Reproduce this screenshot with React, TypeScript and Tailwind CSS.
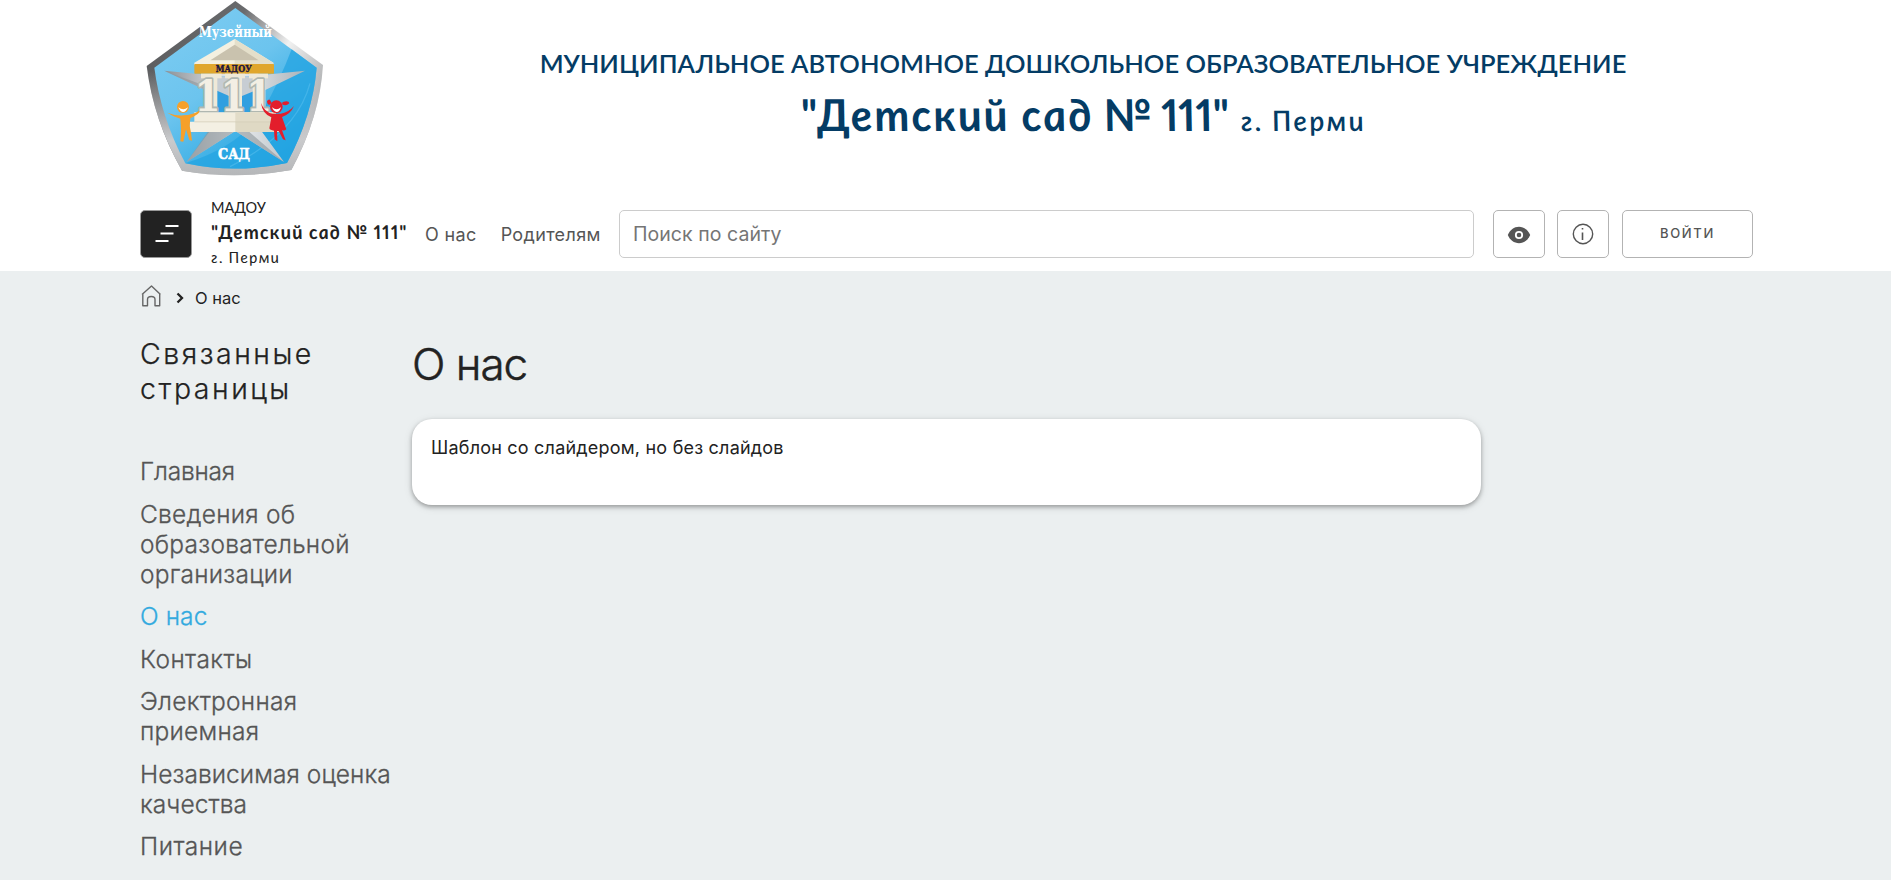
const links: { text: string; cls: string }[] = [
  { text: "Главная", cls: "tracking-[-0.2px]" },
  { text: "Сведения об образовательной организации", cls: "tracking-[0.25px]" },
  { text: "О нас", cls: "tracking-[0.1px] text-[#33aadf]" },
  { text: "Контакты", cls: "tracking-[0.4px]" },
  { text: "Электронная приемная", cls: "tracking-[0.25px]" },
  { text: "Независимая оценка качества", cls: "tracking-[0.07px]" },
  { text: "Питание", cls: "tracking-[0.5px]" },
];

function Emblem() {
  return (
    <svg viewBox="0 0 630 555" className="h-[185px] w-[210px] shrink-0">
      <defs>
        <linearGradient id="rim" x1="0" y1="0" x2="1" y2="0.55">
          <stop offset="0" stopColor="#565759" />
          <stop offset="0.45" stopColor="#6a6b6d" />
          <stop offset="0.72" stopColor="#f1f1f1" />
          <stop offset="1" stopColor="#a9abad" />
        </linearGradient>
        <linearGradient id="rimLow" x1="0" y1="0" x2="0" y2="1">
          <stop offset="0.4" stopColor="#c9cacc" stopOpacity="0" />
          <stop offset="0.8" stopColor="#c9cacc" />
          <stop offset="1" stopColor="#b5b7b9" />
        </linearGradient>
        <linearGradient id="sky" x1="0" y1="0" x2="0.7" y2="1">
          <stop offset="0" stopColor="#7fcdf2" />
          <stop offset="0.5" stopColor="#6cc4ee" />
          <stop offset="1" stopColor="#1fa3e0" />
        </linearGradient>
        <linearGradient id="ray" x1="0" y1="0" x2="1" y2="0">
          <stop offset="0" stopColor="#8b9197" />
          <stop offset="0.5" stopColor="#eef0f2" />
          <stop offset="1" stopColor="#aab3ba" />
        </linearGradient>
      </defs>
      <path d="M316 3 L579 195 Q570 350 484 510 Q315 540 156 512 Q70 360 50 198 Z" fill="url(#rim)" />
      <path d="M316 3 L579 195 Q570 350 484 510 Q315 540 156 512 Q70 360 50 198 Z" fill="url(#rimLow)" />
      <path d="M316 24 L560 203 Q548 345 471 489 Q315 522 166 490 Q92 350 73 203 Z" fill="url(#sky)" />
      <path d="M485 148 L560 203 Q548 345 471 489 Q315 522 166 490 Q330 440 400 330 Q450 240 485 148Z" fill="#24a4e2" opacity="0.75" />
      <path d="M540 250 Q500 400 300 500" stroke="#54bdec" strokeWidth="4" fill="none" opacity="0.6" />
      <path d="M103 212 L245 226 L316 150 L390 226 L525 212 L395 275 L392 390 L462 486 L316 393 L170 486 L242 390 L237 275 Z" fill="url(#ray)" />
      <path d="M103 212 L237 262 V275 Z M316 393 L462 486 L355 393 Z M316 393 L170 486 L235 393 Z" fill="#8e969b" opacity="0.6" />
      <rect x="222" y="230" width="178" height="108" fill="#319fe0" />
      <path d="M222 230 L400 230 L400 262 L316 296 L222 255Z" fill="#c7cdd3" />
      <path d="M314 117 L430 188 V194 H193 V188 Z" fill="#f4f0e0" />
      <path d="M314 117 L430 188 V194 H314 Z" fill="#e4dfca" />
      <path d="M314 134 L386 181 H241 Z" fill="#c9c2ae" />
      <rect x="193" y="192" width="239" height="29" rx="2" fill="#e0a62c" />
      <g fill="#efe9d8">
        <rect x="213" y="221" width="62" height="14" />
        <rect x="285" y="221" width="60" height="14" />
        <rect x="357" y="221" width="57" height="14" />
        <rect x="222" y="233" width="40" height="100" />
        <rect x="296" y="233" width="40" height="100" />
        <rect x="368" y="233" width="38" height="100" />
      </g>
      <text x="311" y="216" textAnchor="middle" textLength="108" lengthAdjust="spacingAndGlyphs" fontSize="28" fontWeight="700" fill="#1c1440" stroke="#1c1440" strokeWidth="1.2" fontFamily="'DejaVu Serif', serif">МАДОУ</text>
      <text x="194" y="333" textLength="232" lengthAdjust="spacingAndGlyphs" fontFamily="'DejaVu Serif', serif" fontSize="131" fontWeight="700" fill="#f3efe4" stroke="#b0b7b0" strokeWidth="11" strokeLinejoin="round" paintOrder="stroke">111</text>
      <path d="M193 337 H437 V366 H193Z" fill="#f2edde" />
      <path d="M316 337 H437 V366 H316Z" fill="#e2dcc8" />
      <path d="M179 365 H452 V396 H179Z" fill="#f4f0e3" />
      <path d="M316 365 H452 V396 H316Z" fill="#dfd9c4" />
      <path d="M193 365.500H437" stroke="#cfc8b2" strokeWidth="2" />
      <g fill="#f6a02a">
        <circle cx="159" cy="321" r="18" />
        <path d="M112 338 Q140 349 160 346 Q188 345 207 332 Q210 338 203 342 Q188 352 181 354 L179 378 Q184 398 186 422 L178 420 L168 388 L160 425 L151 424 Q155 396 151 356 Q130 350 112 338Z" />
      </g>
      <path d="M145 322 Q160 334 174 322 Q168 337 158 336 Q150 334 145 322Z" fill="#fff" />
      <g fill="#e31e2c">
        <circle cx="439" cy="320" r="19" />
        <path d="M422 313 Q412 318 411 303 Q419 292 424 307Z M456 313 Q468 320 478 310 Q477 300 458 306Z" />
        <path d="M393 309 Q404 338 428 341 H452 Q475 338 492 318 Q482 342 456 351 L469 388 Q464 393 456 391 L467 421 L459 418 L446 393 L441 393 L442 424 L434 418 L432 392 Q420 391 418 385 L424 352 Q397 341 393 309Z" />
      </g>
      <path d="M426 322 Q440 334 453 322 Q449 336 440 336 Q431 335 426 322Z" fill="#fff" />
      <text x="316" y="111" textAnchor="middle" textLength="220" lengthAdjust="spacingAndGlyphs" fontSize="45" fontWeight="700" fill="#fff" fontFamily="'DejaVu Serif', serif">Музейный</text>
      <text x="312" y="478" textAnchor="middle" textLength="96" lengthAdjust="spacingAndGlyphs" fontSize="45" fontWeight="700" fill="#fff" stroke="#fff" strokeWidth="1.5" fontFamily="'DejaVu Serif', serif">САД</text>
    </svg>
  );
}

export default function App() {
  return (
    <div className="flex h-[880px] w-full flex-col overflow-hidden bg-white font-['Inter',sans-serif] text-[#222]">
      <header className="flex h-[195px] items-start pl-[130px]">
        <Emblem />
        <div className="ml-[185px] flex w-[1116px] flex-col items-center pt-[43px] font-['Lato',sans-serif] font-semibold text-[#043c65]">
          <div className="h-[41px] text-[25.5px] leading-[40px] tracking-[0.02px] whitespace-nowrap">
            МУНИЦИПАЛЬНОЕ АВТОНОМНОЕ ДОШКОЛЬНОЕ ОБРАЗОВАТЕЛЬНОЕ УЧРЕЖДЕНИЕ
          </div>
          <div className="flex skew-x-[8deg] items-baseline gap-[11px] leading-[60px] whitespace-nowrap proportional-nums italic">
            <span className="text-[44px] font-bold tracking-[0.1px]">
              <span className="tracking-[2.1px]">"Детский сад</span> № 111"
            </span>
            <span className="text-[28px] tracking-[2.3px]">г. Перми</span>
          </div>
        </div>
      </header>

      <nav className="flex h-[76px] shrink-0 items-center pl-[140px]">
        <button className="flex h-[48px] w-[52px] translate-y-[1px] items-center justify-center rounded-[5px] border border-[#999] bg-[#222]">
          <svg width="24" height="18" viewBox="0 0 24 18" className="translate-x-[1px]" stroke="#fff" strokeWidth="2">
            <path d="M10.500 1H23.500M5.500 8.500H18.500M0.500 16H13.500" />
          </svg>
        </button>
        <div className="-mt-[2px] ml-[19px] w-[214px] font-['Lato',sans-serif] whitespace-nowrap proportional-nums">
          <div className="text-[14.500px] leading-[25px]">МАДОУ</div>
          <div className="w-fit skew-x-[8deg] text-[19px] leading-[24px] font-bold tracking-[1.200px] italic">"Детский сад № 111"</div>
          <div className="w-fit skew-x-[8deg] text-[15.500px] leading-[26px] tracking-[1.300px] italic">г. Перми</div>
        </div>
        <div className="flex gap-[24px] pt-[2px] text-[18px] tracking-[0.35px] text-[#555]">
          <a>О нас</a>
          <a>Родителям</a>
        </div>
        <input
          className="ml-auto h-[48px] w-[855px] translate-y-[1px] rounded-[5px] border border-[#ccc] px-[13px] text-[19.5px] tracking-[0.05px] placeholder:text-[#757575]"
          placeholder="Поиск по сайту"
        />
        <div className="mr-[138px] ml-[19px] flex translate-y-[1px] gap-[12px]">
          <button className="flex h-[48px] w-[52px] items-center justify-center rounded-[5px] border border-[#b3b3b3]">
            <svg width="24" height="24" viewBox="0 0 24 24" className="translate-y-[1px]">
              <path d="M0.800 12C3 7 7 3.800 12 3.800S21 7 23.200 12C21 17 17 20.200 12 20.200S3 17 0.800 12Z" fill="#555" />
              <circle cx="12" cy="12" r="3.200" fill="#555" stroke="#fff" strokeWidth="1.800" />
            </svg>
          </button>
          <button className="flex h-[48px] w-[52px] items-center justify-center rounded-[5px] border border-[#b3b3b3]">
            <svg width="22" height="22" viewBox="0 0 22 22" fill="none" stroke="#555">
              <circle cx="11" cy="11" r="9.700" strokeWidth="1.400" />
              <path d="M10.500 9.500V17M10.500 5V6.500" strokeWidth="1.600" />
            </svg>
          </button>
          <button className="ml-[1px] h-[48px] w-[131px] rounded-[5px] border border-[#b3b3b3] text-[13px] font-medium tracking-[1.700px] text-[#555]">
            ВОЙТИ
          </button>
        </div>
      </nav>

      <main className="flex-1 bg-[#ebeff0] pl-[140px]">
        <div className="flex h-[54px] items-center">
          <svg width="21" height="22" viewBox="0 0 21 22" fill="none" stroke="#666" strokeWidth="1.400" strokeLinejoin="round" className="ml-[1px] -translate-y-[2px]">
            <path d="M1 9.500L10.500 1L19.500 9.500M1.800 9V20.800H6.500V14.500Q6.500 11.500 10.300 11.500Q14 11.500 14 14.500V20.800H18.700V9" />
          </svg>
          <svg width="8" height="12" viewBox="0 0 8 12" fill="none" stroke="#222" strokeWidth="2.300" className="ml-[14px]">
            <path d="M1.500 1.500L6 6L1.500 10.500" />
          </svg>
          <span className="ml-[11px] text-[16.500px]">О нас</span>
        </div>
        <div className="flex pt-[11px]">
          <aside className="w-[272px]">
            <h2 className="w-[250px] text-[28.500px] leading-[35px] font-light tracking-[2.500px] [-webkit-text-stroke:0.25px]">Связанные страницы</h2>
            <ul className="mt-[50px] flex flex-col gap-[12.500px] text-[24.500px] leading-[30px] font-light text-[#555] [-webkit-text-stroke:0.3px]">
              {links.map((l) => (
                <li key={l.text} className={l.cls}>{l.text}</li>
              ))}
            </ul>
          </aside>
          <section>
            <h1 className="-mt-[2px] text-[44px] leading-[60px] font-light tracking-[-1px] [-webkit-text-stroke:0.5px]">О нас</h1>
            <div className="mt-[25px] h-[86px] w-[1069px] rounded-[20px] bg-white px-[19px] pt-[15px] text-[18px] leading-[27px] tracking-[0.210px] shadow-[0_2px_4px_rgba(0,0,0,0.3),0_2px_10px_rgba(0,0,0,0.1)]">
              Шаблон со слайдером, но без слайдов
            </div>
          </section>
        </div>
      </main>
    </div>
  );
}
